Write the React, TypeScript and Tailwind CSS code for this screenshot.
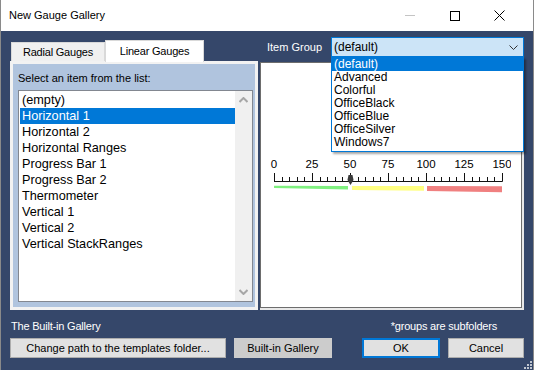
import React from 'react';

const ITEMS = [
  '(empty)',
  'Horizontal 1',
  'Horizontal 2',
  'Horizontal Ranges',
  'Progress Bar 1',
  'Progress Bar 2',
  'Thermometer',
  'Vertical 1',
  'Vertical 2',
  'Vertical StackRanges',
];

const GROUPS = ['(default)', 'Advanced', 'Colorful', 'OfficeBlack', 'OfficeBlue', 'OfficeSilver', 'Windows7'];

const TitleBar: React.FC = () => (
  <div className="h-[31px] bg-white flex items-center pl-[8px] pr-[11px] shrink-0">
    <span className="text-[11px] text-black">New Gauge Gallery</span>
    <div className="ml-auto flex h-full">
      <div className="w-[45px] flex items-center justify-center">
        <div className="w-[10px] h-px bg-[#c4c4c4]" />
      </div>
      <div className="w-[45px] flex items-center justify-center">
        <div className="w-[10px] h-[10px] border border-black" />
      </div>
      <div className="w-[45px] flex items-center justify-center">
        <svg width="11" height="11" viewBox="0 0 11 11">
          <path d="M0.5 0.5 L10.5 10.5 M10.5 0.5 L0.5 10.5" stroke="#000" strokeWidth="1" />
        </svg>
      </div>
    </div>
  </div>
);

const Chevron: React.FC<{ up?: boolean }> = ({ up }) => (
  <svg width="9" height="6" viewBox="0 0 9 6">
    <path
      d={up ? 'M0.5 5 L4.5 1 L8.5 5' : 'M0.5 1 L4.5 5 L8.5 1'}
      fill="none"
      stroke="#a6a6a6"
      strokeWidth="2"
    />
  </svg>
);

const Gauge: React.FC = () => {
  const major = [0, 1, 2, 3, 4, 5, 6].map((i) => 13 + i * 38);
  const minor: number[] = [];
  for (let i = 0; i < 6; i++) {
    for (let j = 1; j < 5; j++) minor.push(13 + i * 38 + (j * 38) / 5);
  }
  return (
    <svg width="250" height="44" viewBox="0 0 250 44" className="block">
      {major.map((x, i) => (
        <text
          key={i}
          x={x}
          y="16"
          textAnchor="middle"
          fontSize="11.5"
          fontFamily="'Liberation Sans', Arial, sans-serif"
          fill="#000"
        >
          {i * 25}
        </text>
      ))}
      <path d="M13 29.5 H241.5" stroke="#111" strokeWidth="1" />
      {major.map((x, i) => (
        <path key={i} d={`M${x + 0.5} 21 V29.5`} stroke="#111" strokeWidth="1" />
      ))}
      {minor.map((x, i) => (
        <path key={i} d={`M${Math.round(x) + 0.5} 25 V29.5`} stroke="#111" strokeWidth="1" />
      ))}
      <polygon points="87.5,23 91.5,23 92.5,28 89.5,33 86.5,28" fill="#3a3a3a" />
      <polygon points="13,33.7 87,33.9 87,37.5 13,36" fill="#7ff07f" />
      <polygon points="91,34 163,34 163,38.7 91,38" fill="#ffff80" />
      <polygon points="166,34 241,34.2 241,40.3 166,39" fill="#f08080" />
    </svg>
  );
};

const Button: React.FC<{ label: string; w: string; className?: string }> = ({ label, w, className }) => (
  <div
    className={`${w} h-[20px] flex items-center justify-center text-[11px] text-black ${
      className ?? 'bg-[#e1e1e1] border border-[#adadad]'
    }`}
  >
    {label}
  </div>
);

export default function App() {
  return (
    <div className="w-[534px] h-[370px] flex flex-col bg-[#35476a] border-x border-[#8a8a8a] relative font-['Liberation_Sans',Arial,sans-serif] overflow-hidden">
      <TitleBar />
      <div className="flex-1 flex flex-col pl-[9px] pr-[9px]">
        {/* header: tabs and item group */}
        <div className="h-[30px] flex shrink-0">
          <div className="w-[248px] h-full flex items-end">
            <div className="ml-[1px] w-[94px] h-[19px] bg-[#f0f0f0] border border-b-0 border-[#d9d9d9] flex items-center justify-center text-[11px] text-black tracking-[-0.2px]">
              Radial Gauges
            </div>
            <div className="relative z-10 -mb-[1px] w-[99px] h-[22px] bg-white border border-b-0 border-[#d9d9d9] flex items-center justify-center text-[11px] text-black tracking-[-0.2px]">
              Linear Gauges
            </div>
          </div>
          <div className="ml-[10px] pt-[6px] flex items-start">
            <div className="w-[64px] h-[20px] flex items-center text-[11px] text-white">
              Item Group
            </div>
            <div className="relative w-[193px] h-[20px] bg-[#cce4f7] border border-[#0078d7] flex items-center pl-[2px] text-[12px] text-black">
              (default)
              <svg width="9" height="5" viewBox="0 0 9 5" className="ml-auto mr-[5px]">
                <path d="M0.5 0.5 L4.5 4.5 L8.5 0.5" fill="none" stroke="#333" strokeWidth="1" />
              </svg>
              {/* open dropdown */}
              <div className="absolute left-[-1px] top-[19px] w-[193px] bg-white border border-[#0078d7] z-20 shadow-[2px_2px_2px_rgba(0,0,0,0.35)] pb-[2px]">
                {GROUPS.map((g, i) => (
                  <div
                    key={g}
                    className={`h-[13px] leading-[13px] pl-[2px] text-[12px] ${
                      i === 0 ? 'bg-[#0078d7] text-white' : 'text-black'
                    }`}
                  >
                    {g}
                  </div>
                ))}
              </div>
            </div>
          </div>
        </div>

        {/* content */}
        <div className="h-[249px] flex shrink-0">
          <div className="w-[248px] h-full bg-[#b0c4de] border-[3px] border-[#f2f2f2] flex flex-col pl-[5px] pr-[2px] pt-[7px]">
            <div className="h-[15px] flex items-center text-[11px] text-black">
              Select an item from the list:
            </div>
            <div className="mt-[4px] w-[235px] h-[212px] bg-white border border-[#828790] flex">
              <div className="flex-1 pt-[1px] pl-[1px]">
                {ITEMS.map((it, i) => (
                  <div
                    key={it}
                    className={`h-[16px] leading-[16px] pl-[2px] text-[12.7px] ${
                      i === 1 ? 'bg-[#0078d7] text-white' : 'text-black'
                    }`}
                  >
                    {it}
                  </div>
                ))}
              </div>
              <div className="w-[17px] h-full bg-[#f0f0f0] flex flex-col items-center justify-between py-[6px]">
                <Chevron up />
                <Chevron />
              </div>
            </div>
          </div>
          <div className="ml-[2px] mt-[1px] w-[264px] h-[248px] bg-[#e8e8e8] pr-[2px] pb-[2px]">
            <div className="w-full h-full bg-white border border-[#6d6d6d] pt-[89px]">
              <Gauge />
            </div>
          </div>
        </div>

        {/* bottom */}
        <div className="mt-[9px] h-[15px] flex items-center justify-between pr-[27px] text-[11px] text-white tracking-[-0.2px]">
          <span className="ml-[1px]">The Built-in Gallery</span>
          <span>*groups are subfolders</span>
        </div>
        <div className="mt-[4px] flex">
          <Button label="Change path to the templates folder..." w="w-[216px]" />
          <Button label="Built-in Gallery" w="w-[98px] ml-[8px]" className="bg-[#cccccc]" />
          <Button label="OK" w="w-[78px] ml-[30px]" className="bg-[#e1e1e1] border-2 border-[#0078d7]" />
          <Button label="Cancel" w="w-[76px] ml-[8px]" />
        </div>
      </div>
      <svg width="10" height="10" viewBox="0 0 10 10" className="absolute right-[1px] bottom-[1px]">
        {[
          [8, 2],
          [5, 5],
          [8, 5],
          [2, 8],
          [5, 8],
          [8, 8],
        ].map(([x, y], i) => (
          <rect key={i} x={x} y={y} width="2" height="2" fill="#c0c6d0" />
        ))}
      </svg>
    </div>
  );
}
